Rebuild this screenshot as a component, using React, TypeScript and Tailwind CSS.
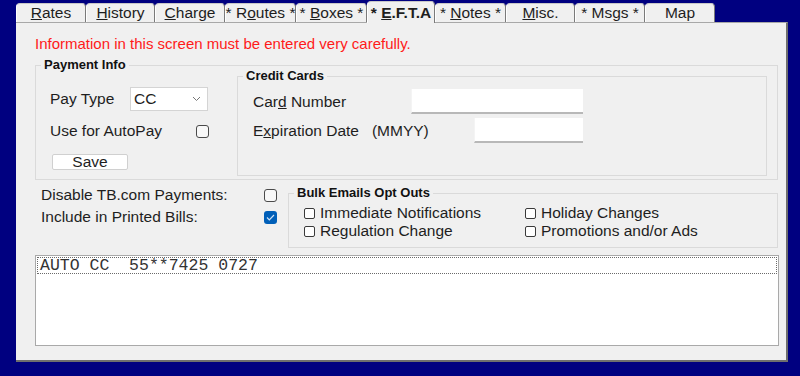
import type { ReactNode } from "react";

// ------------------ Constants ------------------
const tabs = [
  { pre: "", key: "R", rest: "ates", post: "", w: "w-[70px]" },
  { pre: "", key: "H", rest: "istory", post: "", w: "w-[69px]" },
  { pre: "", key: "C", rest: "harge", post: "", w: "w-[70px]" },
  { pre: "* R", key: "o", rest: "utes", post: " *", w: "w-[71px]" },
  { pre: "* ", key: "B", rest: "oxes", post: " *", w: "w-[71px]" },
  { pre: "* ", key: "E", rest: ".F.T.A", post: "", w: "w-[68px]", active: true },
  { pre: "* ", key: "N", rest: "otes", post: " *", w: "w-[71px]" },
  { pre: "", key: "M", rest: "isc.", post: "", w: "w-[69px]" },
  { pre: "* Msgs *", key: "", rest: "", post: "", w: "w-[70px]" },
  { pre: "Map", key: "", rest: "", post: "", w: "w-[70px]" },
];

// ------------------ Components ------------------
export default function App() {
  return (
    <div
      className="w-[800px] h-[376px] bg-[#000080] pl-[16px] overflow-hidden text-[#1e1e1e]"
      style={{ fontFamily: '"Liberation Sans", Arial, sans-serif' }}
    >
      <TabStrip />
      <div className="relative w-[772px] h-[340px] bg-[#f0f0f0] border-t border-[#a8a8a8] border-r-2 border-b-2 border-r-[#6e6e6e] border-b-[#6e6e6e] flex flex-col">
        <p className="mt-[12px] ml-[19px] text-[15px] leading-[17px] text-[#ff1a1a]">
          Information in this screen must be entered very carefully.
        </p>

        <GroupBox title="Payment Info" className="mt-[13px] ml-[19px] w-[743px] h-[115px] flex">
          <PaymentColumn />
          <GroupBox title="Credit Cards" className="mt-[10px] w-[530px] h-[100px]">
            <div className="pt-[12px] pl-[15px] flex items-center h-[37px]">
              <span className="w-[158px] text-[15.5px]">
                Car<u>d</u> Number
              </span>
              <TextInput className="w-[172px]" />
            </div>
            <div className="mt-[4px] pl-[15px] flex items-center h-[25px]">
              <span className="w-[221px] text-[15.5px]">
                E<u>x</u>piration Date&nbsp;&nbsp; (MMYY)
              </span>
              <TextInput className="w-[109px]" />
            </div>
          </GroupBox>
        </GroupBox>

        <div className="flex ml-[19px]">
          <div className="w-[253px] mt-[4px] pl-[6px] text-[15.5px]">
            <div className="flex items-center h-[22px]">
              <span className="w-[223px]">Disable TB.com Payments:</span>
              <CheckBox />
            </div>
            <div className="flex items-center h-[22px]">
              <span className="w-[223px]">Include in Printed Bills:</span>
              <CheckBox checked />
            </div>
          </div>
          <GroupBox title="Bulk Emails Opt Outs" className="mt-[13px] w-[490px] h-[55px]">
            <div className="pt-[10px] pl-[15px] grid grid-cols-[221px_1fr] text-[15.5px]">
              <SmallCheck label="Immediate Notifications" />
              <SmallCheck label="Holiday Changes" />
              <SmallCheck label="Regulation Change" />
              <SmallCheck label="Promotions and/or Ads" />
            </div>
          </GroupBox>
        </div>

        <div className="mt-[7px] ml-[19px] w-[744px] h-[91px] bg-white border border-[#a9a9a9] p-px">
          <div
            className="h-[17px] border border-dotted border-[#6a6a6a] pl-[2px] text-[16.5px] leading-[15px] text-[#333] whitespace-pre"
            style={{ fontFamily: '"Liberation Mono", "Courier New", monospace' }}
          >
            AUTO CC  55**7425 0727
          </div>
        </div>
      </div>
    </div>
  );
}

// ------------------ Sub Components ------------------

const TabStrip = () => (
  <div className="flex items-end h-[22px]">
    {tabs.map((t, i) => (
      <div
        key={i}
        className={
          t.active
            ? `${t.w} h-[22px] -mb-px relative z-10 flex items-center justify-center bg-[#f0f0f0] border-t border-l border-r border-t-[#c8c8c8] border-l-white border-r-[#7a7a7a] rounded-t-[4px] text-[15.5px] font-bold`
            : `${t.w} h-[19px] flex items-center justify-center bg-[#f0f0f0] border-t border-l border-r border-t-[#c8c8c8] border-l-white border-r-[#7a7a7a] rounded-t-[4px] text-[15.5px]`
        }
      >
        <span className="whitespace-pre">
          {t.pre}
          {t.key && <u>{t.key}</u>}
          {t.rest}
          {t.post}
        </span>
      </div>
    ))}
  </div>
);

const GroupBox = ({
  title,
  className,
  children,
}: {
  title: string;
  className?: string;
  children: ReactNode;
}) => (
  <div className={`relative border border-[#dadada] ${className ?? ""}`}>
    <span className="absolute -top-[9px] left-[5px] px-[3px] bg-[#f0f0f0] text-[13px] leading-[15px] font-bold text-[#111]">
      {title}
    </span>
    {children}
  </div>
);

const PaymentColumn = () => (
  <div className="w-[201px] pt-[21px] pl-[14px] text-[15.5px]">
    <div className="flex items-center h-[24px]">
      <span className="w-[80px]">Pay Type</span>
      <div className="w-[78px] h-[24px] bg-white border border-[#d4d4d4] flex items-center justify-between pl-[3px] pr-[6px]">
        <span>CC</span>
        <svg width="9" height="6" viewBox="0 0 9 6" fill="none">
          <path d="M1 1l3.5 3.5L8 1" stroke="#777" strokeWidth="1" />
        </svg>
      </div>
    </div>
    <div className="flex items-center h-[20px] mt-[10px]">
      <span className="w-[146px]">Use for AutoPay</span>
      <CheckBox />
    </div>
    <button className="mt-[13px] ml-[2px] w-[76px] h-[16px] bg-white border border-[#d0d0d0] rounded-[2px] text-[15.5px] leading-[14px] flex items-center justify-center">
      Save
    </button>
  </div>
);

const TextInput = ({ className }: { className: string }) => (
  <div
    className={`h-[25px] bg-white border-b-2 border-b-[#b8b8b8] border-l border-l-[#f4f4f4] ${className}`}
  />
);

const CheckBox = ({ checked }: { checked?: boolean }) =>
  checked ? (
    <span className="w-[13px] h-[13px] rounded-[3px] bg-[#005fb8] flex items-center justify-center">
      <svg width="9" height="7" viewBox="0 0 9 7" fill="none">
        <path d="M1 3.5l2.3 2.3L8 1" stroke="#cfe3f7" strokeWidth="1.2" />
      </svg>
    </span>
  ) : (
    <span className="w-[13px] h-[13px] rounded-[3px] border border-[#4a4a4a] bg-[#f8f8f8]" />
  );

const SmallCheck = ({ label }: { label: string }) => (
  <div className="flex items-center h-[18px]">
    <span className="w-[11px] h-[11px] rounded-[2px] border border-[#3a3a3a] bg-white mr-[5px]" />
    <span>{label}</span>
  </div>
);
